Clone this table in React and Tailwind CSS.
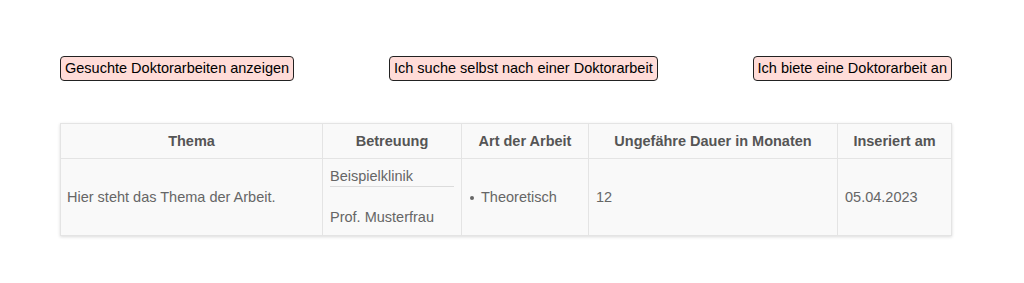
export default function App() {
  const headers = [
    { label: "Thema", w: "w-[262px]" },
    { label: "Betreuung", w: "w-[139px]" },
    { label: "Art der Arbeit", w: "w-[127px]" },
    { label: "Ungefähre Dauer in Monaten", w: "w-[249px]" },
    { label: "Inseriert am", w: "flex-1" },
  ];

  return (
    <div
      className="w-[1024px] h-[283px] bg-white pt-[56px] px-[60px]"
      style={{ fontFamily: '"Liberation Sans", Arial, sans-serif' }}
    >
      <div className="w-[892px] flex justify-between">
        <button className="h-[25px] px-[4px] border border-[#222] rounded-[4px] bg-[#ffdcd8] text-[14.5px] leading-[23px] text-black">
          Gesuchte Doktorarbeiten anzeigen
        </button>
        <button className="h-[25px] px-[4px] border border-[#222] rounded-[4px] bg-[#ffdcd8] text-[14.5px] leading-[23px] text-black">
          Ich suche selbst nach einer Doktorarbeit
        </button>
        <button className="h-[25px] px-[4px] border border-[#222] rounded-[4px] bg-[#ffdcd8] text-[14.5px] leading-[23px] text-black">
          Ich biete eine Doktorarbeit an
        </button>
      </div>

      <div className="mt-[42px] w-[892px] bg-[#f9f9f9] border border-[#e4e4e4] shadow-[0_1px_3px_rgba(0,0,0,0.15)] text-[14.5px]">
        <div className="flex h-[35px] border-b border-[#e4e4e4]">
          {headers.map((h, i) => (
            <div
              key={h.label}
              className={`${h.w} flex items-center justify-center pt-[2px] font-bold text-[#555] ${
                i < headers.length - 1 ? "border-r border-[#e4e4e4]" : ""
              }`}
            >
              {h.label}
            </div>
          ))}
        </div>
        <div className="flex h-[76px] text-[#666]">
          <div className="w-[262px] flex items-center pt-[1px] px-[6px] border-r border-[#e4e4e4]">
            Hier steht das Thema der Arbeit.
          </div>
          <div className="w-[139px] px-[7px] border-r border-[#e4e4e4] flex flex-col">
            <div className="pt-[7px] leading-[20px] border-b border-[#dcdcdc]">Beispielklinik</div>
            <div className="mt-[20px] leading-[20px]">Prof. Musterfrau</div>
          </div>
          <div className="w-[127px] flex items-center pt-[1px] px-[7px] border-r border-[#e4e4e4]">
            <span className="inline-block w-[4px] h-[4px] rounded-full bg-[#666] ml-[1px] mr-[7px]"></span>
            <span>Theoretisch</span>
          </div>
          <div className="w-[249px] flex items-center pt-[1px] px-[7px] border-r border-[#e4e4e4]">12</div>
          <div className="flex-1 flex items-center pt-[1px] px-[7px]">05.04.2023</div>
        </div>
      </div>
    </div>
  );
}
